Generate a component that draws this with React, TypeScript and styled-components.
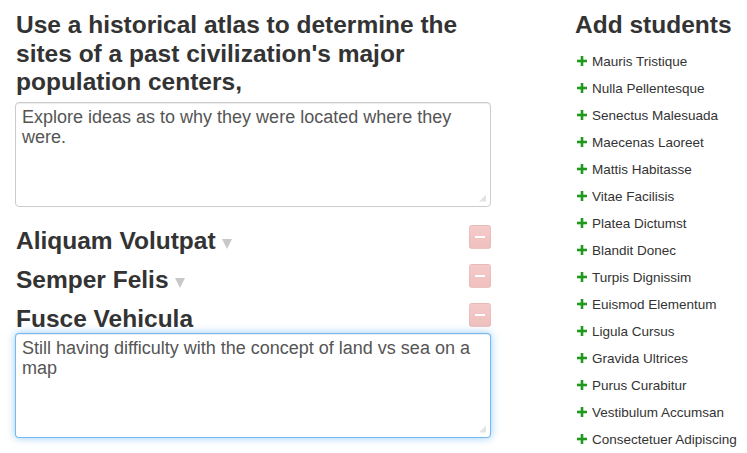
import React from 'react';
import styled, { createGlobalStyle, css } from 'styled-components';

const GlobalStyle = createGlobalStyle`
  html, body {
    margin: 0;
    padding: 0;
    background: #fff;
  }
  body {
    font-family: "Liberation Sans", Arial, sans-serif;
    color: #333;
  }
`;

const Page = styled.div`
  display: flex;
  align-items: flex-start;
  padding: 11px 0 0 15px;
`;

const MainColumn = styled.div`
  width: 476px;
  display: flex;
  flex-direction: column;
`;

const SideColumn = styled.div`
  margin-left: 84px;
  display: flex;
  flex-direction: column;
`;

const Heading = styled.h3`
  margin: 0 0 5px 1px;
  font-size: 24.5px;
  line-height: 28.5px;
  font-weight: bold;
  color: #333;
`;

const NoteWrap = styled.div`
  position: relative;
  width: 476px;
  height: 105px;

  &::after {
    content: '';
    position: absolute;
    right: 5px;
    bottom: 5px;
    width: 7px;
    height: 7px;
    background-image: radial-gradient(circle, #c2c2c2 0.6px, transparent 0.8px);
    background-size: 2px 2px;
    clip-path: polygon(100% 0, 100% 100%, 0 100%);
    pointer-events: none;
  }
`;

const Note = styled.textarea<{ $focused?: boolean }>`
  box-sizing: border-box;
  width: 100%;
  height: 100%;
  margin: 0;
  padding: 4px 6px;
  font-family: "Liberation Sans", Arial, sans-serif;
  font-size: 18px;
  line-height: 20px;
  color: #555;
  background: #fff;
  border: 1px solid #ccc;
  border-radius: 4px;
  box-shadow: inset 0 1px 1px rgba(0, 0, 0, 0.075);
  outline: none;
  resize: none;
  ${(p) =>
    p.$focused &&
    css`
      border-color: rgba(82, 168, 236, 0.8);
      box-shadow: inset 0 1px 1px rgba(0, 0, 0, 0.075), 0 0 8px rgba(82, 168, 236, 0.6);
    `}
`;

const Sections = styled.div`
  margin-top: 18px;
  display: flex;
  flex-direction: column;
  gap: 9px;
`;

const SectionHeader = styled.div`
  display: flex;
  justify-content: space-between;
  align-items: flex-start;
  height: 30px;
`;

const SectionTitle = styled.h3`
  margin: 0 0 0 1px;
  padding-top: 1px;
  font-size: 24.5px;
  line-height: 30px;
  font-weight: bold;
  color: #333;
  display: flex;
  align-items: baseline;
`;

const Caret = styled.span`
  display: inline-block;
  width: 0;
  height: 0;
  margin-left: 6px;
  border-left: 5.5px solid transparent;
  border-right: 5.5px solid transparent;
  border-top: 10px solid #c8c8c8;
`;

const RemoveButton = styled.button`
  width: 22px;
  height: 24px;
  padding: 0;
  border: 1px solid rgba(0, 0, 0, 0.03);
  border-radius: 3px;
  background: linear-gradient(#f4cbc9, #efc0be);
  display: flex;
  align-items: center;
  justify-content: center;
  cursor: pointer;
`;

const Dash = styled.span`
  width: 10px;
  height: 2px;
  background: #fff;
`;

const SideTitle = styled.h3`
  margin: 0;
  font-size: 24.5px;
  line-height: 28.5px;
  font-weight: bold;
  color: #333;
`;

const StudentList = styled.ul`
  list-style: none;
  margin: 8px 0 0;
  padding: 0 0 0 2px;
`;

const Student = styled.li`
  display: flex;
  align-items: center;
  height: 27px;
  font-size: 13.5px;
  color: #333;
  gap: 5px;
  cursor: pointer;
`;

const PlusIcon = () => (
  <svg width="10" height="10" viewBox="0 0 10 10" aria-hidden="true">
    <rect x="3.7" y="0" width="2.6" height="10" fill="#1f9a1f" />
    <rect x="0" y="3.7" width="10" height="2.6" fill="#1f9a1f" />
  </svg>
);

const sections = [
  { title: 'Aliquam Volutpat', collapsed: true },
  { title: 'Semper Felis', collapsed: true },
  { title: 'Fusce Vehicula', collapsed: false, note: 'Still having difficulty with the concept of land vs sea on a map' },
];

const students = [
  'Mauris Tristique',
  'Nulla Pellentesque',
  'Senectus Malesuada',
  'Maecenas Laoreet',
  'Mattis Habitasse',
  'Vitae Facilisis',
  'Platea Dictumst',
  'Blandit Donec',
  'Turpis Dignissim',
  'Euismod Elementum',
  'Ligula Cursus',
  'Gravida Ultrices',
  'Purus Curabitur',
  'Vestibulum Accumsan',
  'Consectetuer Adipiscing',
];

export default function App() {
  return (
    <>
      <GlobalStyle />
      <Page>
        <MainColumn>
          <Heading>
            Use a historical atlas to determine the sites of a past civilization's major population centers,
          </Heading>
          <NoteWrap>
            <Note defaultValue="Explore ideas as to why they were located where they were." />
          </NoteWrap>
          <Sections>
            {sections.map((s) => (
              <div key={s.title}>
                <SectionHeader>
                  <SectionTitle>
                    {s.title}
                    {s.collapsed && <Caret />}
                  </SectionTitle>
                  <RemoveButton aria-label="Remove">
                    <Dash />
                  </RemoveButton>
                </SectionHeader>
                {s.note && (
                  <NoteWrap>
                    <Note $focused defaultValue={s.note} />
                  </NoteWrap>
                )}
              </div>
            ))}
          </Sections>
        </MainColumn>
        <SideColumn>
          <SideTitle>Add students</SideTitle>
          <StudentList>
            {students.map((name) => (
              <Student key={name}>
                <PlusIcon />
                {name}
              </Student>
            ))}
          </StudentList>
        </SideColumn>
      </Page>
    </>
  );
}
